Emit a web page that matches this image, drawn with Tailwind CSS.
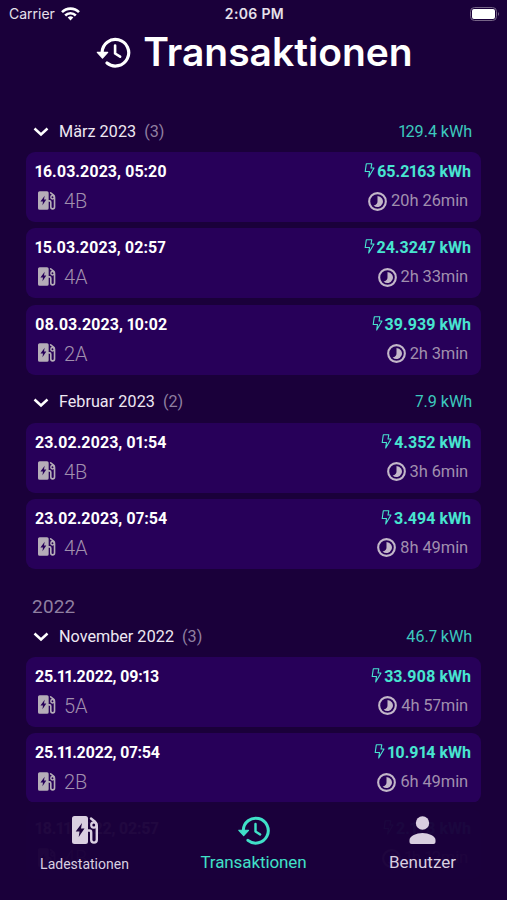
<!DOCTYPE html>
<html lang="de">
  <head>
    <meta charset="UTF-8" />
    <meta name="viewport" content="width=device-width, initial-scale=1.0" />
    <title>Transaktionen</title>
    <script src="https://cdn.jsdelivr.net/npm/@tailwindcss/browser@4"></script>
  </head>
  <body class="bg-[#1a003a] text-white font-[Roboto,sans-serif] h-[900px] overflow-hidden relative">
    <!-- Icons -->
    <svg class="hidden">
      <symbol id="history" viewBox="0 0 34 32" fill="none" stroke="currentColor" stroke-linecap="round">
        <path d="M5.6 16.5A13.3 13.3 0 1 1 10.5 27" stroke-width="3.2" />
        <path d="M0.8 16.3h10.4L6 22Z" fill="currentColor" stroke-width="1.2" stroke-linejoin="round" />
        <path d="M18.6 9.5v8l5 3.2" stroke-width="2.6" stroke-linejoin="round" />
      </symbol>
      <symbol id="station" viewBox="0 0 27 28">
        <path fill="currentColor" fill-rule="evenodd" d="M2.5 0h11A2.5 2.5 0 0 1 16 2.5v23a2.5 2.5 0 0 1-2.5 2.5h-11A2.5 2.5 0 0 1 0 25.5v-23A2.5 2.5 0 0 1 2.5 0ZM10 7 3.7 15.5H7.5L6.7 21 12.5 12.5H9Z" />
        <path fill="none" stroke="currentColor" stroke-width="2.4" stroke-linecap="round" d="M16 14.5h1.5q1.7 0 1.7 2v7.3a2.8 2.8 0 0 0 5.6 0V9.5q0-2-1.5-3.5L19 2.5" />
        <circle cx="21.8" cy="9" r="2.6" fill="none" stroke="currentColor" stroke-width="2.2" />
      </symbol>
      <symbol id="clock" viewBox="0 0 18 18">
        <circle cx="9" cy="9" r="7.9" fill="none" stroke="currentColor" stroke-width="2" />
        <path fill="currentColor" d="M9 3.8a5.2 5.2 0 1 1-3.7 8.9Q9 12 9 9Z" />
      </symbol>
      <symbol id="bolt" viewBox="0 0 11 15">
        <path fill="none" stroke="currentColor" stroke-width="1.1" stroke-linejoin="round" d="M2.3.8h5.5L7 5h3L4.7 14l.8-5.500H1.2Z" />
      </symbol>
      <symbol id="chevron" viewBox="0 0 16 10">
        <path fill="none" stroke="currentColor" stroke-width="2.5" d="m1.5 1.500 6.500 6 6.500-6" />
      </symbol>
    </svg>

    <!-- Status bar -->
    <div class="h-[27px] pl-[9px] pr-[7px] grid grid-cols-3 items-center font-[Inter,sans-serif] text-[14px] text-[#e6e0ea]">
      <div class="flex items-center gap-[6px]">
        <span>Carrier</span>
        <svg class="w-[19px] h-[14px]" viewBox="0 0 19 14" fill="none" stroke="white" stroke-width="2.6">
          <path d="M1 5.200a12 12 0 0 1 17 0M4.200 8.500a7.500 7.500 0 0 1 10.600 0" />
          <path d="m9.500 13.500-2.800-2.900a4 4 0 0 1 5.600 0Z" fill="white" stroke="none" />
        </svg>
      </div>
      <div class="text-center font-semibold tracking-[0.35px]">2:06 PM</div>
      <svg class="justify-self-end w-[30px] h-[14px]" viewBox="0 0 30 14">
        <rect x=".5" y=".5" width="26" height="13" rx="4" fill="none" stroke="#766487" />
        <rect x="2" y="2" width="23" height="10" rx="2" fill="white" />
        <path d="M28 5q2 2 0 4Z" fill="#766487" />
      </svg>
    </div>

    <header class="flex items-center justify-center gap-[12px] h-[50px] pl-[2px]">
      <svg class="w-[35px] h-[32px]"><use href="#history" /></svg>
      <h1 class="font-[Inter,sans-serif] font-semibold text-[39px] leading-none -mt-[2px]">Transaktionen</h1>
    </header>

    <main id="transactions" class="px-[26px] pt-[42px] proportional-nums"></main>

    <!-- Tab bar -->
    <nav class="absolute inset-x-0 bottom-0 h-[98px] bg-[#1a003a]/97 grid grid-cols-3 text-[#d9cfe0]">
      <a class="flex flex-col items-center pt-[14px]">
        <svg class="w-[27px] h-[28px] ml-[2px]"><use href="#station" /></svg>
        <span class="text-[14px] leading-5 mt-[10px]">Ladestationen</span>
      </a>
      <a class="flex flex-col items-center pt-[13px] text-[#40e0c8]">
        <svg class="w-[32px] h-[30px]"><use href="#history" /></svg>
        <span class="text-[17px] leading-5 mt-[7px] tracking-[-0.1px]">Transaktionen</span>
      </a>
      <a class="flex flex-col items-center pt-[14px]">
        <svg class="w-[27px] h-[29px]" viewBox="0 0 27 29" fill="currentColor">
          <circle cx="13.500" cy="7" r="6.700" />
          <path d="M.5 26v-2c0-4 7-7 13-7s13 3 13 7v2q0 2-2 2h-22q-2 0-2-2Z" />
        </svg>
        <span class="text-[17px] leading-5 mt-[7px]">Benutzer</span>
      </a>
    </nav>

    <script>
      const groups = [
        {
          month: "März 2023",
          total: "129.4",
          items: [
            ["16.03.2023, 05:20", "4B", "65.2163", "20h 26min"],
            ["15.03.2023, 02:57", "4A", "24.3247", "2h 33min"],
            ["08.03.2023, 10:02", "2A", "39.939", "2h 3min"],
          ],
        },
        {
          month: "Februar 2023",
          total: "7.9",
          items: [
            ["23.02.2023, 01:54", "4B", "4.352", "3h 6min"],
            ["23.02.2023, 07:54", "4A", "3.494", "8h 49min"],
          ],
        },
        {
          year: "2022",
          month: "November 2022",
          total: "46.7",
          items: [
            ["25.11.2022, 09:13", "5A", "33.908", "4h 57min"],
            ["25.11.2022, 07:54", "2B", "10.914", "6h 49min"],
            ["18.11.2022, 02:57", "4B", "2.178", "1h 12min"],
          ],
        },
      ];

      const card = ([date, station, energy, duration]) => `
        <div class="h-[70px] rounded-[9px] bg-[#270059] pl-[9px] pr-[10px] pt-[9px] mb-[6.3px]">
          <div class="flex justify-between text-[16px] leading-[22px] font-bold">
            <span class="${date.includes(".11.") ? "tracking-[-0.25px]" : ""}">${date}</span>
            <span class="flex items-center gap-[2px] text-[#48e5d0]">
              <svg class="w-[11px] h-[15px] -mt-[3px]"><use href="#bolt" /></svg>${energy} kWh
            </span>
          </div>
          <div class="flex justify-between items-center mt-[7px] px-[3px] leading-[22px] text-[#a08fae]">
            <span class="flex items-center gap-[8px] text-[20px] font-light">
              <svg class="w-[18px] h-[19px] -mt-[2px] text-[#b5adb8]"><use href="#station" /></svg>${station}
            </span>
            <span class="flex items-center gap-[4px] text-[16.5px] tracking-[-0.15px]">
              <svg class="w-[19px] h-[19px] text-[#c3b7c9]"><use href="#clock" /></svg>${duration}
            </span>
          </div>
        </div>`;

      document.getElementById("transactions").innerHTML = groups
        .map(
          (group) => `
        <section class="mb-[15px]">
          ${group.year ? `<h2 class="pl-[6px] pt-[12px] h-[40px] text-[19px] leading-[22px] text-[#8f7fa0]">${group.year}</h2>` : ""}
          <div class="flex items-center h-[26px] mb-[7px] pl-[7px] pr-[9px] text-[16.2px]">
            <svg class="w-[16px] h-[10px] mr-[10px]"><use href="#chevron" /></svg>
            <span class="text-[#eee8f2]">${group.month}</span>
            <span class="ml-[8px] text-[#8f7fa0]">(${group.items.length})</span>
            <span class="ml-auto text-[#3cc9be] tracking-[-0.1px]">${group.total} kWh</span>
          </div>
          ${group.items.map(card).join("")}
        </section>`
        )
        .join("");
    </script>
  </body>
</html>
